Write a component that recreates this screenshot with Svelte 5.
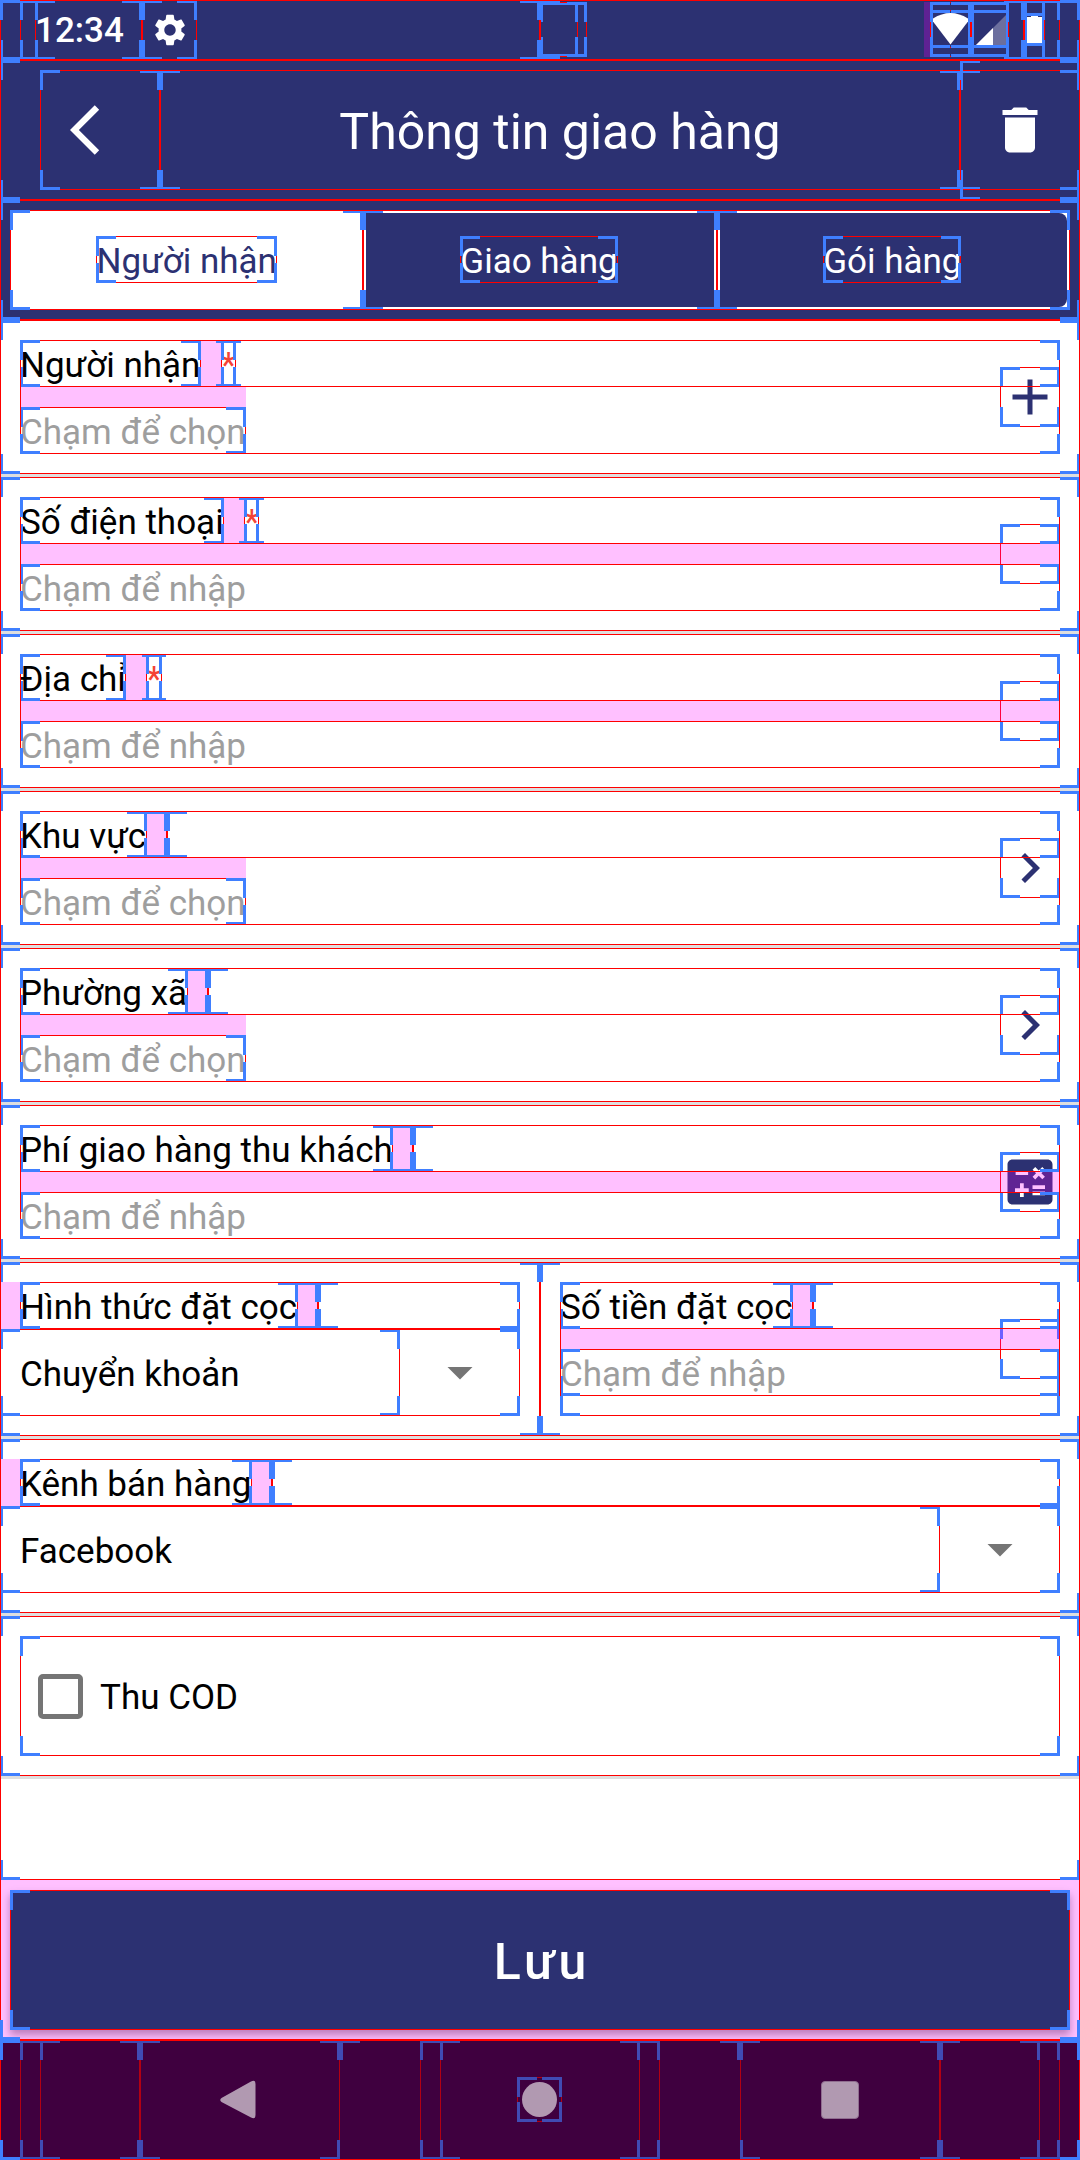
<script>
  const tabs = ['Người nhận', 'Giao hàng', 'Gói hàng'];

  const fields = [
    { label: 'Người nhận', required: true, hint: 'Chạm để chọn', pick: true, icon: 'add' },
    { label: 'Số điện thoại', required: true, hint: 'Chạm để nhập' },
    { label: 'Địa chỉ', required: true, hint: 'Chạm để nhập' },
    { label: 'Khu vực', hint: 'Chạm để chọn', pick: true, icon: 'chevron' },
    { label: 'Phường xã', hint: 'Chạm để chọn', pick: true, icon: 'chevron' },
    { label: 'Phí giao hàng thu khách', hint: 'Chạm để nhập', icon: 'calculate' }
  ];

  const icons = {
    add: 'M19 13h-6v6h-2v-6H5v-2h6V5h2v6h6v2z',
    chevron: 'M10 6L8.59 7.41 13.17 12l-4.58 4.59L10 18l6-6z',
    calculate:
      'M19 3H5c-1.1 0-2 .9-2 2v14c0 1.1.9 2 2 2h14c1.1 0 2-.9 2-2V5c0-1.1-.9-2-2-2zm-5.97 4.06L14.09 6l1.41 1.41L16.91 6l1.06 1.06-1.41 1.41 1.41 1.41-1.06 1.06-1.41-1.4-1.41 1.41-1.06-1.06 1.41-1.41-1.41-1.42zm-6.78.66h5v1.5h-5v-1.5zM11.5 16h-2v2H8v-2H6v-1.5h2v-2h1.5v2h2V16zm6.5 1.25h-5v-1.5h5v1.5zm0-2.5h-5v-1.5h5v1.5z',
    back: 'M11.67 3.87L9.9 2.1 0 12l9.9 9.9 1.77-1.77L3.54 12z',
    trash: 'M6 19c0 1.1.9 2 2 2h8c1.1 0 2-.9 2-2V7H6v12zM19 4h-3.5l-1-1h-5l-1 1H5v2h14V4z',
    gear: 'M19.14 12.94c.04-.3.06-.61.06-.94 0-.32-.02-.64-.07-.94l2.03-1.58c.18-.14.23-.41.12-.61l-1.92-3.32c-.12-.22-.37-.29-.59-.22l-2.39.96c-.5-.38-1.03-.7-1.62-.94l-.36-2.54c-.04-.24-.24-.41-.48-.41h-3.84c-.24 0-.43.17-.47.41l-.36 2.54c-.59.24-1.13.57-1.62.94l-2.39-.96c-.22-.08-.47 0-.59.22L2.74 8.87c-.12.21-.08.47.12.61l2.03 1.58c-.05.3-.09.63-.09.94s.02.64.07.94l-2.03 1.58c-.18.14-.23.41-.12.61l1.92 3.32c.12.22.37.29.59.22l2.39-.96c.5.38 1.03.7 1.62.94l.36 2.54c.05.24.24.41.48.41h3.84c.24 0 .44-.17.47-.41l.36-2.54c.59-.24 1.13-.56 1.62-.94l2.39.96c.22.08.47 0 .59-.22l1.92-3.32c.12-.22.07-.47-.12-.61l-2.01-1.58zM12 15.6c-1.98 0-3.6-1.62-3.6-3.6s1.62-3.6 3.6-3.6 3.6 1.62 3.6 3.6-1.62 3.6-3.6 3.6z'
  };
</script>

{#snippet glyph(name, size)}
  <svg class="glyph" width={size} height={size} viewBox="0 0 24 24"><path d={icons[name]} /></svg>
{/snippet}

{#snippet labelRow(text, required, indented)}
  <div class="label-row bound" class:indented>
    <span class="text label bound">{text}</span>
    <span class="text mark bound">{required ? '*' : ''}</span>
  </div>
{/snippet}

{#snippet field(f)}
  <div class="field bound">
    <div class="action bound">
      {#if f.icon}{@render glyph(f.icon, 60)}{/if}
    </div>
    {@render labelRow(f.label, f.required, false)}
    <div class="text hint bound" class:pick={f.pick}>{f.hint}</div>
  </div>
{/snippet}

{#snippet dropdown(label, value)}
  <div class="dropdown">
    {@render labelRow(label, false, true)}
    <div class="select bound">
      <div class="selected bound"><span class="text">{value}</span></div>
      <div class="arrow">
        <svg width="60" height="60" viewBox="0 0 24 24"><path d="M7 10l5 5 5-5z" /></svg>
      </div>
    </div>
  </div>
{/snippet}

<div class="screen">
  <div class="content bound">
    <div class="status bound">
      <div class="status-left bound">
        <div class="time bound">12:34</div>
        <div class="notice bound">{@render glyph('gear', 38)}</div>
      </div>
      <div class="status-right bound">
        <div class="system bound">
          <div class="cutout bound"><div class="cutout-inner bound"></div></div>
          <div class="radios">
            <div class="wifi bound">
              <div class="radio-inner bound">
                <svg width="41" height="38" viewBox="0 0 41 38"><path d="M3 8.500Q20.500-2.500 38 8.500V11.500L20.500 34.500L3 11.500z" fill="#fff" /></svg>
              </div>
            </div>
            <div class="signal bound">
              <div class="radio-inner bound">
                <svg width="38" height="38" viewBox="0 0 38 38">
                  <path d="M5 35L35 5V35z" fill="#6c6f9e" />
                  <path d="M5 35L22 18V35z" fill="#fff" />
                </svg>
              </div>
            </div>
          </div>
        </div>
        <div class="battery-slot bound">
          <div class="battery bound">
            <svg width="21" height="33" viewBox="0 0 21 33"><path d="M3 4h4V3h7v1h4v26H3z" fill="#fff" /></svg>
          </div>
        </div>
      </div>
    </div>

    <header class="bound">
      <div class="toolbar bound">
        <div class="back bound">{@render glyph('back', 60)}</div>
        <h1 class="bound">Thông tin giao hàng</h1>
        <div class="trash bound">{@render glyph('trash', 60)}</div>
      </div>
      <div class="menu-slot bound"></div>
    </header>

    <nav class="tabs bound">
      <div class="tab-strip bound">
        {#each tabs as tab, i}
          <div class="tab bound" class:active={i === 0}>
            <div class="tab-face"><span class="text bound">{tab}</span></div>
          </div>
        {/each}
      </div>
    </nav>

    <main class="bound">
      {#each fields as f}
        <section class="card bound">{@render field(f)}</section>
        <div class="rule"></div>
      {/each}
      <section class="card split bound">
        <div class="half bound">{@render dropdown('Hình thức đặt cọc', 'Chuyển khoản')}</div>
        <div class="half money bound">
          {@render field({ label: 'Số tiền đặt cọc', hint: 'Chạm để nhập' })}
        </div>
      </section>
      <div class="rule"></div>
      <section class="card channel bound">{@render dropdown('Kênh bán hàng', 'Facebook')}</section>
      <div class="rule"></div>
      <section class="card bound">
        <div class="check bound">
          <span class="box"></span>
          <span class="text">Thu COD</span>
        </div>
      </section>
      <div class="rule"></div>
    </main>

    <div class="save-area">
      <button class="bound">Lưu</button>
    </div>
  </div>

  <footer class="bound">
    <div class="nav-frame bound dim">
      <div class="nav-row bound dim">
        <div class="nav-side bound dim"></div>
        <div class="nav-key bound dim">
          <svg width="40" height="46" viewBox="0 0 40 46"><path d="M3.500 21L33 4.500Q37.500 2 37.500 7V38Q37.500 43 33 40.500L3.500 25Q1 23 3.500 21z" /></svg>
        </div>
        <div class="nav-dot bound dim"></div>
        <div class="nav-home-wrap bound dim">
          <div class="nav-home bound dim">
            <div class="home-icon bound dim"><span class="disc"></span></div>
          </div>
        </div>
        <div class="nav-dot bound dim"></div>
        <div class="nav-key bound dim"><span class="square"></span></div>
        <div class="nav-side bound dim"></div>
      </div>
    </div>
  </footer>
</div>

<style>
  :global(body) {
    margin: 0;
    background: #fff;
  }

  .screen {
    --navy: #2c3172;
    --edge: #f00;
    --corner: #3f7fff;
    --margin: rgba(255, 0, 255, 0.247);
    width: 1080px;
    height: 2160px;
    display: flex;
    flex-direction: column;
    overflow: hidden;
    background: #fff;
    color: #000;
    font-family: Roboto, 'Noto Sans', sans-serif;
    font-size: 35px;
  }

  .screen * {
    box-sizing: border-box;
  }

  svg {
    display: block;
  }

  .glyph {
    fill: currentColor;
  }

  /* Layout bounds: a hairline frame with 20px corner brackets that may
     extend past boxes narrower than the brackets. */
  .bound {
    position: relative;
  }

  .bound::after {
    content: '';
    position: absolute;
    inset: 0 -20px;
    pointer-events: none;
    --c: linear-gradient(var(--corner), var(--corner));
    --e: linear-gradient(var(--edge), var(--edge));
    background:
      var(--c) 20px 0 / 20px 3px,
      var(--c) 20px 0 / 3px 20px,
      var(--c) calc(100% - 20px) 0 / 20px 3px,
      var(--c) calc(100% - 20px) 0 / 3px 20px,
      var(--c) 20px 100% / 20px 3px,
      var(--c) 20px 100% / 3px 20px,
      var(--c) calc(100% - 20px) 100% / 20px 3px,
      var(--c) calc(100% - 20px) 100% / 3px 20px,
      var(--e) 20px 0 / calc(100% - 40px) 1px,
      var(--e) 20px 100% / calc(100% - 40px) 1px,
      var(--e) 20px 0 / 1px 100%,
      var(--e) calc(100% - 20px) 0 / 1px 100%;
    background-repeat: no-repeat;
  }

  .dim {
    --edge: #b20012;
    --corner: #404bb3;
  }

  .content {
    height: 2040px;
    display: flex;
    flex-direction: column;
  }

  .text {
    display: block;
    height: 47px;
    line-height: 52px;
    white-space: nowrap;
  }

  /* status bar */
  .status {
    height: 60px;
    flex: none;
    padding: 0 20px;
    display: flex;
    background: var(--navy);
    color: #fff;
  }

  .status-left {
    width: 520px;
    padding-left: 15px;
    display: flex;
  }

  .time {
    width: 107px;
    line-height: 62px;
    font-weight: 500;
  }

  .notice {
    width: 55px;
    display: flex;
    align-items: center;
    justify-content: center;
  }

  .status-right {
    width: 520px;
    display: flex;
  }

  .system {
    width: 484px;
    padding: 2px 15px 3px 0;
    display: flex;
    justify-content: space-between;
  }

  .cutout {
    width: 47px;
  }

  .cutout-inner {
    width: 38px;
    height: 100%;
  }

  .radios {
    position: relative;
    display: flex;
  }

  .radios::before {
    content: '';
    position: absolute;
    left: -6px;
    top: 0;
    width: 6px;
    height: 100%;
    background: #5f2293;
  }

  .wifi,
  .signal {
    padding-top: 8px;
  }

  .radio-inner {
    height: 38px;
  }

  .battery-slot {
    width: 21px;
    padding-top: 13px;
  }

  .battery {
    height: 33px;
  }

  /* app bar */
  header {
    height: 140px;
    flex: none;
    padding: 10px 0 10px 40px;
    background: var(--navy);
    color: #fff;
  }

  .toolbar {
    height: 120px;
    display: flex;
  }

  .back,
  .trash {
    width: 120px;
    display: flex;
    align-items: center;
    justify-content: center;
  }

  h1 {
    width: 800px;
    margin: 0;
    text-align: center;
    font-size: 50px;
    font-weight: 400;
    line-height: 124px;
  }

  .menu-slot {
    position: absolute;
    right: 0;
    top: 0;
    width: 120px;
    height: 100%;
  }

  /* tabs */
  .tabs {
    height: 120px;
    flex: none;
    padding: 10px;
    background: var(--navy);
    color: #fff;
  }

  .tab-strip {
    height: 100px;
    display: flex;
    background: #fff;
  }

  .tab {
    flex: 1;
    padding: 3px;
  }

  .tab-face {
    height: 94px;
    padding: 0 2px 1px 0;
    display: flex;
    align-items: center;
    justify-content: center;
    background: var(--navy);
  }

  .tab-face .text {
    line-height: 51px;
  }

  .tab.active .tab-face {
    padding-right: 0;
    background: #fff;
    color: var(--navy);
  }

  .tab:last-child .tab-face {
    border-radius: 0 8px 8px 0;
  }

  /* form */
  main {
    height: 1560px;
    flex: none;
  }

  .card {
    padding: 20px;
  }

  .rule {
    height: 3px;
    background: #dedede;
  }

  .field {
    min-height: 114px;
  }

  .label-row {
    display: flex;
    height: 47px;
  }

  .label {
    padding-right: 0.5px;
  }

  .mark {
    margin-left: 20px;
    color: #f44336;
  }

  .mark::before {
    content: '';
    position: absolute;
    left: -20px;
    top: 0;
    width: 20px;
    height: 100%;
    background: var(--margin);
  }

  .hint {
    margin-top: 20px;
    color: #9e9e9e;
  }

  .hint::before {
    content: '';
    position: absolute;
    left: 0;
    top: -20px;
    width: 100%;
    height: 20px;
    background: var(--margin);
  }

  .hint.pick {
    width: max-content;
  }

  .action {
    position: absolute;
    right: 0;
    top: calc(50% - 30px);
    width: 60px;
    height: 60px;
    color: var(--navy);
  }

  .split,
  .channel {
    padding: 0;
  }

  .split {
    display: flex;
  }

  .half {
    width: 540px;
    padding: 20px 20px 20px 0;
  }

  .half.money {
    padding-left: 20px;
  }

  .money .field {
    height: 134px;
  }

  .channel {
    padding: 20px 20px 20px 0;
  }

  .indented {
    margin-left: 20px;
  }

  .indented::before {
    content: '';
    position: absolute;
    left: -20px;
    top: 0;
    width: 20px;
    height: 100%;
    background: var(--margin);
  }

  .select {
    height: 87px;
    display: flex;
  }

  .selected {
    flex: 1;
    padding: 20px 0 0 20px;
  }

  .arrow {
    width: 120px;
    padding-bottom: 1px;
    display: flex;
    align-items: center;
    justify-content: center;
    fill: #757575;
  }

  .check {
    height: 120px;
    padding-left: 17.5px;
    display: flex;
    align-items: center;
    gap: 17.5px;
  }

  .check .text {
    line-height: 50px;
  }

  .box {
    width: 45px;
    height: 45px;
    border: 5px solid #757575;
    border-radius: 5px;
  }

  /* save button */
  .save-area {
    position: relative;
    height: 160px;
    padding: 10px;
  }

  .save-area::after {
    content: '';
    position: absolute;
    inset: 0;
    border: 10px solid var(--margin);
    pointer-events: none;
  }

  button {
    display: block;
    width: 1060px;
    height: 140px;
    padding: 0 0 0 4px;
    border: 0;
    background: var(--navy);
    color: #fff;
    font-family: inherit;
    font-size: 50px;
    font-weight: 500;
    letter-spacing: 4px;
    line-height: 144px;
    box-shadow: 0 5px 8px rgba(0, 0, 0, 0.35);
  }

  /* navigation bar */
  footer {
    height: 120px;
    padding: 0 20px;
    background: #3f003f;
  }

  .nav-frame {
    height: 120px;
    padding: 0 20px;
  }

  .nav-row {
    height: 120px;
    display: flex;
  }

  .nav-side {
    width: 100px;
  }

  .nav-key {
    width: 200px;
    display: flex;
    align-items: center;
    justify-content: center;
    fill: #b199b1;
  }

  .nav-key svg {
    margin-right: 5px;
  }

  /* zero-width spacer: only its top bracket shows */
  .nav-dot {
    width: 0;
    height: 23px;
    clip-path: inset(0 -20px 3px);
  }

  .nav-home-wrap {
    width: 240px;
    margin: 0 80px;
    padding: 0 20px;
  }

  .nav-home {
    height: 120px;
    padding: 0 1px 1px 0;
    display: flex;
    align-items: center;
    justify-content: center;
  }

  .home-icon {
    width: 45px;
    height: 45px;
    display: flex;
    align-items: center;
    justify-content: center;
  }

  .disc {
    width: 35px;
    height: 35px;
    border-radius: 50%;
    background: #b199b1;
  }

  .square {
    width: 38px;
    height: 38px;
    border: 1px solid #8f6d8f;
    border-radius: 4px;
    background: #b199b1;
  }
</style>
